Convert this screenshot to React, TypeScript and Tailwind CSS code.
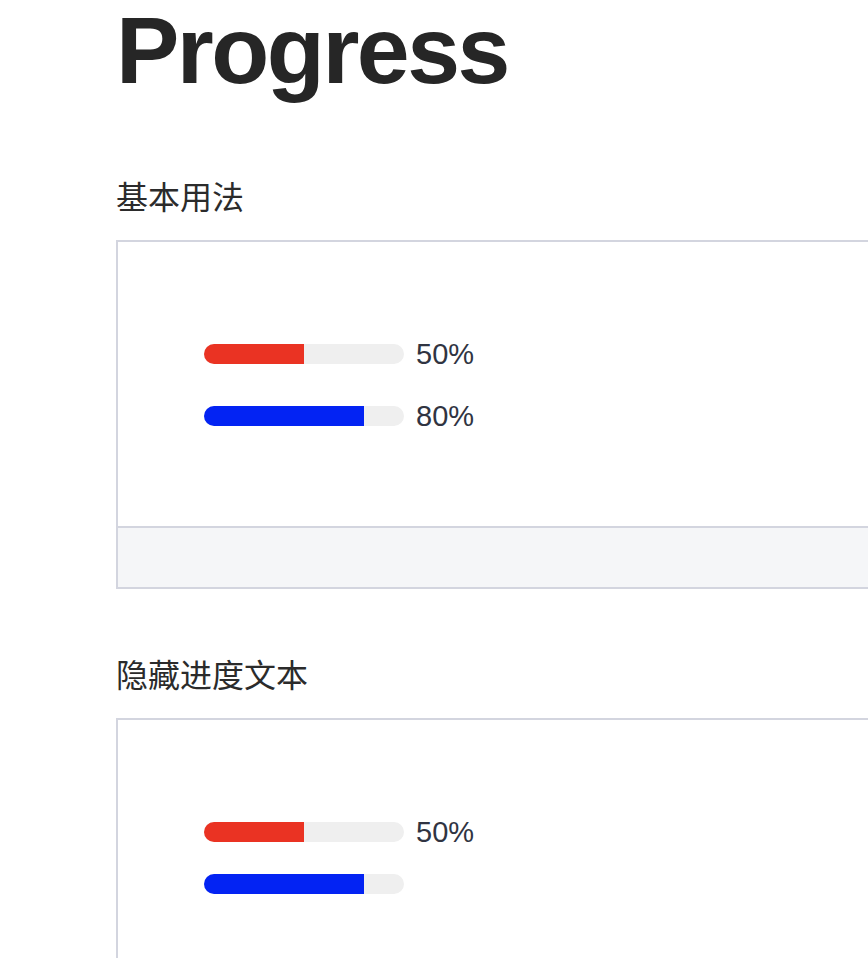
import React from "react";

type Bar = { percent: number; color: string; showText?: boolean };

const ProgressBar = ({ percent, color, showText = true }: Bar) => {
  return (
    <div className={`flex items-center ${showText ? "h-[40px]" : "h-[20px]"}`}>
      <div className="w-[200px] h-[20px] rounded-full bg-[#efefef] overflow-hidden">
        <div className={`h-full ${color}`} style={{ width: `${percent}%` }} />
      </div>
      {showText && (
        <span className="ml-[12px] text-[29px] leading-[40px] text-[#303442] font-['Liberation_Sans',sans-serif]">
          {percent}%
        </span>
      )}
    </div>
  );
};

const Demo = ({ title, hideSecond }: { title: string; hideSecond: boolean }) => {
  return (
    <section>
      <h2 className="text-[32px] leading-[40px] text-[#2b2b2b] font-['Noto_Sans_CJK_SC',sans-serif] mb-[25px]">
        {title}
      </h2>
      <div className="border-2 border-[#d3d5df] w-[820px]">
        <div className="pt-[92px] pb-[90px] pl-[86px] flex flex-col gap-[22px]">
          <ProgressBar percent={50} color="bg-[#ea3323]" />
          <ProgressBar percent={80} color="bg-[#0323f3]" showText={!hideSecond} />
        </div>
        <div className="h-[61px] border-t-2 border-[#d3d5df] bg-[#f5f6f8]" />
      </div>
    </section>
  );
};

export default function App() {
  return (
    <div className="w-full h-[958px] overflow-hidden bg-white">
      <div className="pl-[116px] pt-[3px]">
        <h1 className="text-[95px] leading-none font-bold tracking-[-2.5px] text-[#262626] font-['Liberation_Sans',sans-serif]">
          Progress
        </h1>
        <div className="mt-[77px] flex flex-col gap-[64px]">
          <Demo title="基本用法" hideSecond={false} />
          <Demo title="隐藏进度文本" hideSecond={true} />
        </div>
      </div>
    </div>
  );
}
